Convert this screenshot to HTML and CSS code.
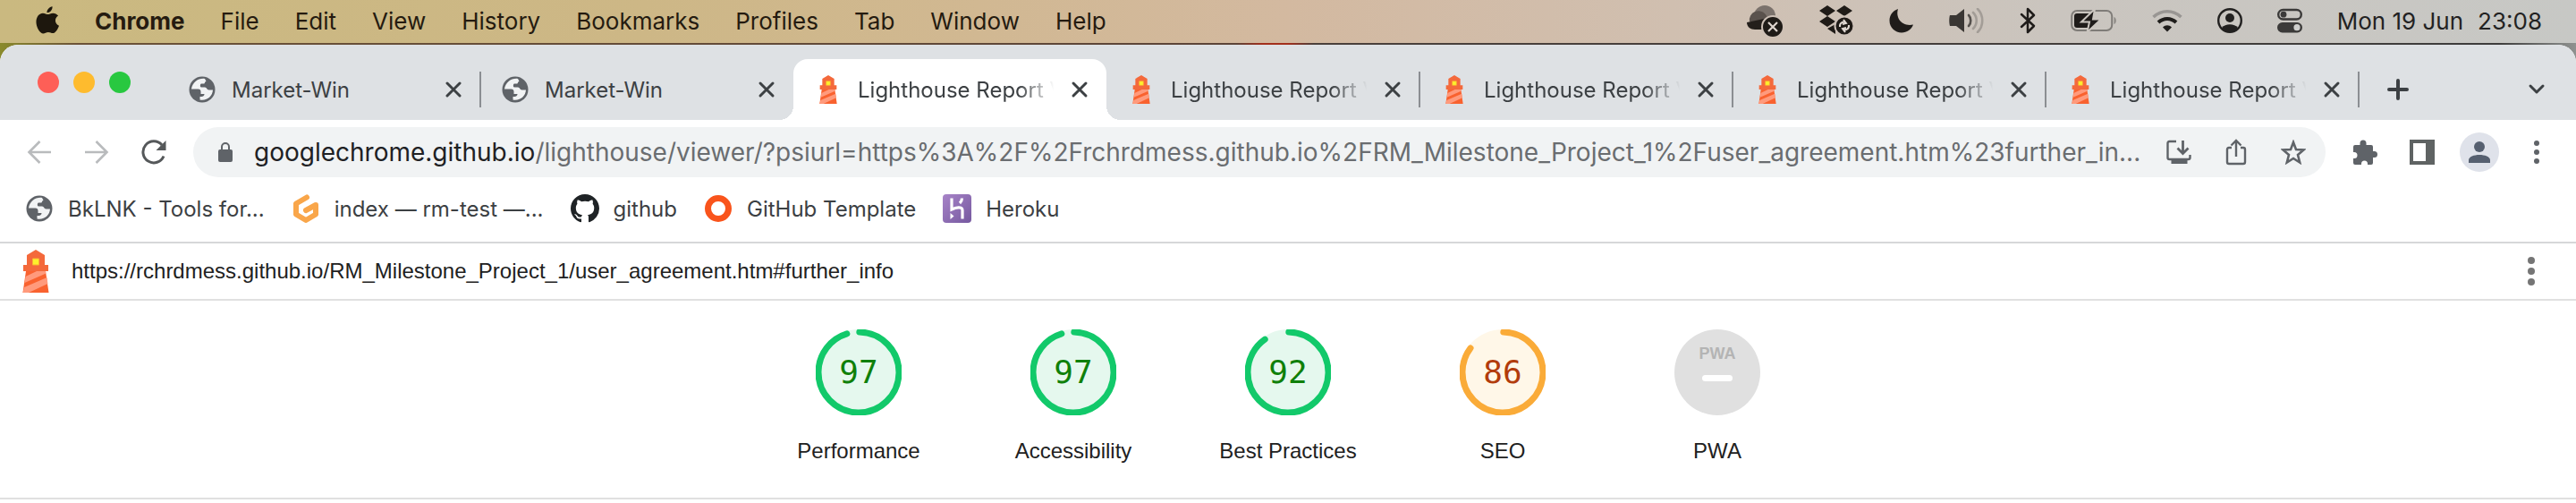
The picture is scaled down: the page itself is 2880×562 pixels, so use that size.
FILE: index.html
```html
<!DOCTYPE html>
<html lang="en">
<head>
<meta charset="utf-8">
<title>Lighthouse Report Viewer</title>
<link rel="stylesheet" href="styles.css">
</head>
<body>
<svg class="defs" aria-hidden="true">
  <symbol id="globe" viewBox="0 0 32 32">
    <circle cx="16" cy="16" r="14.500"/>
    <path class="cut" d="M19 4C12 3 5 8 4 15.500h7.500c2 0 3 1 3 3v2.500h4c0 2.500-2 3-5 3v3.500c8 1.500 14-4 14.500-11h-4.500c-2.500 0-2-3-4.500-3h-4c-1.500 0-1.500-3.500 0-4h3c1 0 1-2.500 2.500-2.800z"/>
  </symbol>
  <symbol id="lighthouse" viewBox="0 0 30 48">
    <path fill="#f4693b" d="M15 0l10 6v11h4v7H1v-7h4V6z"/>
    <path fill="#f9622f" d="M4 24h22l3.500 24H.5z"/>
    <path fill="#ff9a7c" d="M3.500 30L16 24h10l.4 2.500L2.500 37zM2 42l25.500-11 .9 7L7 48H.5z"/>
    <path fill="#fdf02c" stroke="#f9b233" stroke-width="1" d="M11.500 10h7v7h-7z"/>
  </symbol>
  <symbol id="close" viewBox="0 0 20 20">
    <path fill="none" stroke="#3c4043" stroke-width="3" stroke-linecap="round" d="M3 3l14 14M17 3L3 17"/>
  </symbol>
</svg>

<header class="menubar">
  <nav class="menus">
    <svg class="apple" viewBox="0 0 28 34"><path d="M20 0c.3 4-2.800 7.500-6.500 7.500C13 4 16.500.5 20 0zM14.500 9.500c1.500 0 3.500-1.500 6.500-1.500 2 0 4.500 1 6 3.200-5 3-4.200 10 1 12-1.500 4.500-4.500 9-7.500 9-2 0-3-1.200-5.500-1.200S11 32.500 9 32.500C5 32.500.5 25 .5 18.500.5 12 4.500 8 8.500 8c2.500 0 4.500 1.500 6 1.500z"/></svg>
    <a class="menu app" href="#">Chrome</a>
    <a class="menu" href="#">File</a>
    <a class="menu" href="#">Edit</a>
    <a class="menu" href="#">View</a>
    <a class="menu" href="#">History</a>
    <a class="menu" href="#">Bookmarks</a>
    <a class="menu" href="#">Profiles</a>
    <a class="menu" href="#">Tab</a>
    <a class="menu" href="#">Window</a>
    <a class="menu" href="#">Help</a>
  </nav>
  <div class="status">
    <svg width="42" height="36" viewBox="0 0 42 36"><circle cx="21" cy="13" r="12" fill="#7b726c"/><path d="M10 8a10 10 0 0 1 14 8v8l-20-5a10 10 0 0 1 6-11z" fill="#5a524d"/><path d="M1 20l24-5v13H10c-5 0-9-3-9-8z" fill="#241f1b"/><circle cx="30" cy="25" r="12" fill="#1f1b17" stroke="#cdc0b6" stroke-width="2"/><path d="M25 20l10 10M35 20L25 30" stroke="#ded5ce" stroke-width="2.200"/></svg>
    <svg width="40" height="34" viewBox="0 0 40 34"><path fill="#1f1b17" d="M10 0l9 6-9 6-9-6zM29 0l9 6-9 6-9-6zM10 12l9 6-9 6-9-6zM10 26l9-5v11z"/><circle cx="29" cy="23" r="10.500" fill="#1f1b17" stroke="#cdc1b8" stroke-width="2"/><path d="M24 24c-.5-4 3-6.500 6.500-5M34 22c.5 4-3 6.500-6.500 5M28 16l3 4-4 1M30 30l-3-4 4-1" fill="none" stroke="#e0d8d2" stroke-width="2"/></svg>
    <svg width="28" height="28" viewBox="0 0 28 28"><path fill="#1f1c1a" d="M10 1C7 11 14 21 27 18.500 25 24 20 27.500 14 27.500 7 27.500.5 22 .5 14 .5 8 4 3 10 1z"/></svg>
    <svg width="40" height="28" viewBox="0 0 40 28"><path fill="#3a3734" d="M1 8h7l9-7v26l-9-7H1c-1-3-1-9 0-12z"/><path fill="none" stroke="#55514d" stroke-width="2.600" stroke-linecap="round" d="M22 8c3 3 3 9 0 12"/><path fill="none" stroke="#a39d97" stroke-width="2.600" stroke-linecap="round" d="M27 5c5 5 5 13 0 18M32 1c7 7 7 19 0 26"/></svg>
    <svg width="18" height="30" viewBox="0 0 18 30"><path fill="none" stroke="#1f1c1a" stroke-width="2.500" stroke-linejoin="round" stroke-linecap="round" d="M2 8l14 13-7 7V2l7 7L2 22"/></svg>
    <svg width="52" height="26" viewBox="0 0 52 26"><rect x="1.200" y="2" width="45" height="22" rx="6" fill="none" stroke="#7f7c78" stroke-width="2"/><path fill="#8a8783" d="M48.500 9c3 1 3 7 0 8z"/><rect x="4" y="5" width="20" height="16" rx="3" fill="#1f1c1a"/><path fill="#1f1c1a" stroke="#cac5bf" stroke-width="2" d="M27 0L12 14.500h9L18.500 26 34 11.500h-9z"/></svg>
    <svg width="34" height="26" viewBox="0 0 34 26"><path fill="none" stroke="#999693" stroke-width="3.500" d="M1.500 9c9-8.500 22-8.500 31 0"/><path fill="none" stroke="#1f1d1b" stroke-width="4" d="M7 15c6-5.500 14-5.500 20 0"/><path fill="#1f1d1b" d="M17 25.500l-5-5c3-3 7-3 10 0z"/></svg>
    <svg width="28" height="28" viewBox="0 0 28 28"><circle cx="14" cy="14" r="12.800" fill="none" stroke="#222120" stroke-width="2.400"/><circle cx="14" cy="11" r="5" fill="#222120"/><path fill="#222120" d="M5 22c4-5 14-5 18 0-4 6-14 6-18 0z"/></svg>
    <svg width="28" height="28" viewBox="0 0 28 28"><rect x="1.200" y="2" width="25.600" height="10.500" rx="5.200" fill="none" stroke="#3b3a39" stroke-width="2.400"/><circle cx="7" cy="7.200" r="3.400" fill="#3b3a39"/><rect y="16" width="28" height="11.500" rx="5.700" fill="#3b3a39"/><circle cx="22" cy="21.700" r="3.600" fill="#d0d0ce"/></svg>
    <time class="clock"><span>Mon 19 Jun</span><span>23:08</span></time>
  </div>
</header>

<div class="desktop">
<div class="window">
  <div class="tabstrip">
    <div class="lights"><button class="light red" aria-label="Close window"></button><button class="light amber" aria-label="Minimise"></button><button class="light green" aria-label="Zoom"></button></div>
    <div class="tab"><svg class="fav grey"><use href="#globe"/></svg><span class="title">Market-Win</span><button class="x" aria-label="Close tab"><svg><use href="#close"/></svg></button></div>
    <div class="tab last"><svg class="fav grey"><use href="#globe"/></svg><span class="title">Market-Win</span><button class="x" aria-label="Close tab"><svg><use href="#close"/></svg></button></div>
    <div class="tab active"><svg class="fav"><use href="#lighthouse"/></svg><span class="title fade">Lighthouse Report Viewer</span><button class="x" aria-label="Close tab"><svg><use href="#close"/></svg></button></div>
    <div class="tab"><svg class="fav"><use href="#lighthouse"/></svg><span class="title fade">Lighthouse Report Viewer</span><button class="x" aria-label="Close tab"><svg><use href="#close"/></svg></button></div>
    <div class="tab"><svg class="fav"><use href="#lighthouse"/></svg><span class="title fade">Lighthouse Report Viewer</span><button class="x" aria-label="Close tab"><svg><use href="#close"/></svg></button></div>
    <div class="tab"><svg class="fav"><use href="#lighthouse"/></svg><span class="title fade">Lighthouse Report Viewer</span><button class="x" aria-label="Close tab"><svg><use href="#close"/></svg></button></div>
    <div class="tab"><svg class="fav"><use href="#lighthouse"/></svg><span class="title fade">Lighthouse Report Viewer</span><button class="x" aria-label="Close tab"><svg><use href="#close"/></svg></button></div>
    <button class="icon newtab" aria-label="New tab"><svg width="24" height="24" viewBox="0 0 24 24"><path stroke="#3c4043" stroke-width="4" stroke-linecap="round" d="M12 2v20M2 12h20"/></svg></button>
    <button class="icon search" aria-label="Search tabs"><svg width="20" height="14" viewBox="0 0 20 14"><path fill="none" stroke="#3c4043" stroke-width="3" stroke-linecap="round" stroke-linejoin="round" d="M3 3l7 7 7-7"/></svg></button>
  </div>

  <div class="toolbar">
    <div class="navs">
      <button class="icon" aria-label="Back"><svg width="28" height="28" viewBox="0 0 28 28"><path fill="none" stroke="#b9bbbd" stroke-width="2.600" d="M27 14H3M14.500 2L2.500 14l12 12"/></svg></button>
      <button class="icon" aria-label="Forward"><svg width="28" height="28" viewBox="0 0 28 28"><path fill="none" stroke="#b9bbbd" stroke-width="2.600" d="M1 14h24M13.500 2l12 12-12 12"/></svg></button>
      <button class="icon" aria-label="Reload"><svg width="28" height="28" viewBox="0 0 28 28"><path fill="none" stroke="#55585a" stroke-width="3" d="M25 18.500A12 12 0 1 1 23 6"/><path fill="#55585a" d="M27.500 1v11h-11z"/></svg></button>
    </div>
    <div class="omnibox">
      <svg class="lock" width="16" height="22" viewBox="0 0 16 22"><rect y="8" width="16" height="14" rx="2" fill="#5f6368"/><path fill="none" stroke="#5f6368" stroke-width="2" d="M4 9V5a4 4 0 0 1 8 0v4"/></svg>
      <div class="url"><span class="host">googlechrome.github.io</span>/lighthouse/viewer/?psiurl=https%3A%2F%2Frchrdmess.github.io%2FRM_Milestone_Project_1%2Fuser_agreement.htm%23further_in...</div>
      <div class="actions">
        <button class="icon" aria-label="Install"><svg width="28" height="28" viewBox="0 0 28 28"><path fill="none" stroke="#5f6368" stroke-width="2.400" d="M11 2H3.500Q1.500 2 1.500 4v16q0 2 2 2h21q2 0 2-2v-3"/><path fill="#5f6368" d="M5.500 22h18v5h-18z"/><path fill="none" stroke="#5f6368" stroke-width="2.800" d="M18.500 1v14M12.500 9.500l6 6 6-6"/></svg></button>
        <button class="icon" aria-label="Share"><svg width="28" height="30" viewBox="0 0 28 30"><path fill="none" stroke="#5f6368" stroke-width="2.400" d="M9 10H6q-2 0-2 2v14q0 2 2 2h16q2 0 2-2V12q0-2-2-2h-3M14 20V2M8.500 7.500L14 2l5.500 5.500"/></svg></button>
        <button class="icon" aria-label="Bookmark"><svg width="28" height="28" viewBox="0 0 28 28"><path fill="none" stroke="#5f6368" stroke-width="2.600" d="M14 3l3 8 8.500.5-6.500 5.500 2.200 8.500L14 21l-7.200 4.500L9 17l-6.500-5.500L11 11z"/></svg></button>
      </div>
    </div>
    <div class="tools">
      <button class="icon" aria-label="Extensions"><svg width="28" height="28" viewBox="0 0 28 28"><path fill="#5f6368" d="M8.500 6V4a3.500 3.500 0 0 1 7 0v2H21q2 0 2 2v5h1.500a3.500 3.500 0 0 1 0 7H23v6q0 2-2 2h-4v-1a3.500 3.500 0 0 0-7 0v1H3q-2 0-2-2v-5h1a3.500 3.500 0 0 0 0-7H1V8q0-2 2-2z"/></svg></button>
      <button class="icon" aria-label="Side panel"><svg width="28" height="28" viewBox="0 0 28 28"><path fill="#5f6363" fill-rule="evenodd" d="M0 0h28v28H0zM4 4v20h14V4z"/></svg></button>
      <button class="icon avatar" aria-label="Profile"><svg width="24" height="24" viewBox="0 0 24 24"><circle cx="12" cy="6" r="6" fill="#566070"/><path fill="#566070" d="M0 24v-3c0-8 24-8 24 0v3z"/></svg></button>
      <button class="icon" aria-label="Menu"><svg width="8" height="28" viewBox="0 0 8 28"><g fill="#5f6368"><circle cx="4" cy="4" r="3"/><circle cx="4" cy="14" r="3"/><circle cx="4" cy="24" r="3"/></g></svg></button>
    </div>
  </div>

  <nav class="bookmarks">
    <a class="bm" href="#"><svg class="bmi grey"><use href="#globe"/></svg>BkLNK - Tools for...</a>
    <a class="bm" href="#"><svg class="bmi" viewBox="0 0 32 32"><path fill="none" stroke="#f9a64a" stroke-width="6" stroke-linecap="round" stroke-linejoin="round" d="M17 3.500L5 10.500v12L16 29l11-6.500V12L16 18"/></svg>index — rm-test —...</a>
    <a class="bm" href="#"><svg class="bmi" viewBox="0 0 16 16"><path fill="#1f2326" d="M8 0C3.580 0 0 3.580 0 8c0 3.540 2.290 6.530 5.470 7.590.4.070.55-.17.55-.38 0-.19-.01-.82-.01-1.490-2.010.37-2.530-.49-2.690-.94-.09-.23-.48-.94-.82-1.130-.28-.15-.68-.52-.01-.53.63-.01 1.080.58 1.230.82.72 1.210 1.870.87 2.330.66.070-.52.280-.87.510-1.070-1.780-.2-3.640-.89-3.640-3.950 0-.87.310-1.590.82-2.150-.08-.2-.36-1.020.08-2.120 0 0 .67-.21 2.200.82.64-.18 1.320-.27 2-.27s1.360.09 2 .27c1.530-1.040 2.200-.82 2.200-.82.44 1.100.16 1.920.08 2.120.51.56.82 1.270.82 2.150 0 3.070-1.870 3.750-3.650 3.950.29.25.54.73.54 1.480 0 1.070-.01 1.930-.01 2.200 0 .21.15.46.55.38A8.010 8.010 0 0 0 16 8c0-4.420-3.580-8-8-8z"/></svg>github</a>
    <a class="bm" href="#"><svg class="bmi" viewBox="0 0 32 32"><circle cx="16" cy="16" r="11.500" fill="none" stroke="#f9541c" stroke-width="7"/></svg>GitHub Template</a>
    <a class="bm" href="#"><svg class="bmi" viewBox="0 0 32 32"><defs><linearGradient id="hk" x1="0" y1="0" x2="1" y2="1"><stop offset="0" stop-color="#a884c8"/><stop offset="1" stop-color="#75589f"/></linearGradient></defs><rect width="32" height="32" rx="4" fill="url(#hk)"/><path fill="none" stroke="#fff" stroke-width="3.200" d="M10 4.500V17c4-2 12-4 12 1v9.500M21.500 4.500c0 2-1 4-2.500 5.500"/><path fill="#fff" d="M8.500 21l4 3.500-4 3.500z"/></svg>Heroku</a>
  </nav>

  <main class="report">
    <div class="topbar">
      <svg class="logo"><use href="#lighthouse"/></svg>
      <a class="tested" href="#">https://rchrdmess.github.io/RM_Milestone_Project_1/user_agreement.htm#further_info</a>
      <button class="icon more" aria-label="Tools"><svg width="8" height="34" viewBox="0 0 8 34"><g fill="#757575"><circle cx="4" cy="5" r="4"/><circle cx="4" cy="17" r="4"/><circle cx="4" cy="29" r="4"/></g></svg></button>
    </div>
    <div class="scores">
      <a class="gauge pass" href="#"><span class="dial"><svg viewBox="0 0 96 96"><circle class="base" cx="48" cy="48" r="48"/><circle class="arc" cx="48" cy="48" r="45" pathLength="100" stroke-dasharray="95 100"/></svg><span class="num">97</span></span>Performance</a>
      <a class="gauge pass" href="#"><span class="dial"><svg viewBox="0 0 96 96"><circle class="base" cx="48" cy="48" r="48"/><circle class="arc" cx="48" cy="48" r="45" pathLength="100" stroke-dasharray="95 100"/></svg><span class="num">97</span></span>Accessibility</a>
      <a class="gauge pass" href="#"><span class="dial"><svg viewBox="0 0 96 96"><circle class="base" cx="48" cy="48" r="48"/><circle class="arc" cx="48" cy="48" r="45" pathLength="100" stroke-dasharray="90 100"/></svg><span class="num">92</span></span>Best Practices</a>
      <a class="gauge average" href="#"><span class="dial"><svg viewBox="0 0 96 96"><circle class="base" cx="48" cy="48" r="48"/><circle class="arc" cx="48" cy="48" r="45" pathLength="100" stroke-dasharray="85 100"/></svg><span class="num">86</span></span>SEO</a>
      <a class="gauge none" href="#"><span class="dial"><svg viewBox="0 0 96 96"><circle class="base" cx="48" cy="48" r="48"/><rect x="31" y="51" width="34" height="7" rx="3.500" fill="#fff"/></svg><span class="pwa">PWA</span></span>PWA</a>
    </div>
    <hr class="rule">
  </main>
</div>
</div>
</body>
</html>
```
FILE: styles.css
```css
* { box-sizing: border-box; }
body { margin: 0; font-family: Inter, "Liberation Sans", sans-serif; background: #fff; }
a { color: inherit; text-decoration: none; }
button { border: 0; padding: 0; background: none; }
svg { display: block; flex: none; }
.defs { display: none; }

.menubar { display: flex; align-items: center; justify-content: space-between; height: 48px; padding: 0 38px 2px 40px; color: #251b10; font-size: 26px;
  background: linear-gradient(90deg, #cab980 0%, #cdb786 25%, #d1b892 38%, #d3b9a0 50%, #d0bfb0 65%, #cac5bf 80%, #c7c8c5 100%); }
.menus { display: flex; align-items: center; }
.apple { width: 26px; height: 32px; margin-right: 40px; fill: #1d170d; }
.menu { margin-right: 40px; white-space: nowrap; }
.app { font-weight: 700; }
.status { display: flex; align-items: center; gap: 39px; color: #222; }
.clock { display: flex; gap: 16px; white-space: nowrap; }

.desktop { padding-top: 2px; background: linear-gradient(90deg, #8a8a2c 0%, #6b5238 3%, #5c4438 48%, #a32f1c 49%, #a32f1c 50%, #4a403b 51%, #3d3c3b 97%, #8f9290 100%); }
.window { background: #fff; border-radius: 20px 20px 0 0; overflow: hidden; }
.tabstrip { display: flex; align-items: flex-end; height: 84px; background: #dee1e4; }
.lights { display: flex; gap: 16px; align-self: center; width: 187px; padding-left: 42px; flex: none; }
.light { width: 24px; height: 24px; border-radius: 50%; }
.red { background: #fe5f57; }
.amber { background: #febb2e; }
.green { background: #28c840; }
.tab { position: relative; display: flex; align-items: center; flex: 0 1 350px; min-width: 0; height: 68px; padding: 0 20px 0 23px; color: #3c4043; font-size: 24px; }
.tab::after { content: ""; position: absolute; right: -1px; top: 14px; width: 2px; height: 40px; background: #8b8e92; }
.tab.active::after, .tab.last::after { display: none; }
.tab.active { background: #fff; border-radius: 16px 16px 0 0; }
.tab.active::before { content: ""; position: absolute; left: -16px; right: -16px; bottom: 0; height: 16px;
  background: radial-gradient(circle at 0 0, transparent 16px, #fff 16px) left / 16px 16px no-repeat, radial-gradient(circle at 100% 0, transparent 16px, #fff 16px) right / 16px 16px no-repeat; }
.fav { width: 32px; height: 32px; margin-right: 17px; }
.grey { fill: #5f6368; }
.cut { fill: #f1f3f4; }
.title { flex: 1; min-width: 0; overflow: hidden; white-space: nowrap; }
.fade { -webkit-mask-image: linear-gradient(90deg, #000 80%, transparent 98%); mask-image: linear-gradient(90deg, #000 80%, transparent 98%); }
.x { margin-left: 14px; }
.x svg { width: 20px; height: 20px; }
.icon { display: flex; align-items: center; justify-content: center; flex: none; width: 64px; height: 56px; }
.newtab { margin: 0 auto 6px 12px; }
.search { margin: 0 12px 6px 0; }

.toolbar { display: flex; align-items: center; padding: 8px 12px; }
.navs, .actions, .tools { display: flex; align-items: center; }
.navs { margin-right: 12px; }
.omnibox { flex: 1; min-width: 0; display: flex; align-items: center; height: 56px; padding: 0 4px 0 28px; background: #f1f3f4; border-radius: 28px; }
.lock { margin-right: 24px; }
.url { flex: 1; min-width: 0; overflow: hidden; text-overflow: ellipsis; white-space: nowrap; color: #6a6d70; font-size: 28px; }
.host { color: #202124; }
.actions { margin-left: 8px; }
.tools { margin-left: 12px; }
.avatar { position: relative; }
.avatar::before { content: ""; position: absolute; width: 44px; height: 44px; border-radius: 50%; background: #dfe2ea; }
.avatar svg { position: relative; }

.bookmarks { display: flex; align-items: center; gap: 30px; height: 66px; padding: 0 28px 10px; border-bottom: 2px solid #d6d7d9; color: #3c4043; font-size: 24px; }
.bm { display: flex; align-items: center; gap: 16px; white-space: nowrap; }
.bmi { width: 32px; height: 32px; }

.report { font-family: "Liberation Sans", Arial, sans-serif; font-size: 24px; color: #212121; }
.topbar { display: flex; align-items: center; height: 64px; padding: 0 18px 0 24px; border-bottom: 2px solid #e0e0e0; }
.logo { width: 32px; height: 48px; margin-right: 24px; }
.tested { flex: 1; }
.scores { display: flex; justify-content: center; padding: 32px 0 37px; }
.gauge { display: flex; flex-direction: column; align-items: center; gap: 25px; width: 240px; line-height: 30px; }
.dial { position: relative; display: grid; place-items: center; width: 96px; height: 96px; }
.dial svg { position: absolute; inset: 0; }
.arc { fill: none; stroke-width: 7px; stroke-linecap: round; transform: rotate(-89deg); transform-origin: center; }
.num { position: relative; font-family: "DejaVu Sans Mono", monospace; font-size: 36px; }
.pass .base { fill: #e5f8ee; }
.pass .arc { stroke: #12c96a; }
.pass .num { color: #0f8009; }
.average .base { fill: #fff7e8; }
.average .arc { stroke: #faab38; }
.average .num { color: #b23c0c; }
.none .base { fill: #e0e0e0; }
.pwa { position: relative; align-self: start; padding-top: 12px; color: #b4b4b4; font-size: 18px; font-weight: 700; }
.rule { margin: 0; border: 0; border-top: 2px solid #e0e0e0; }
```
